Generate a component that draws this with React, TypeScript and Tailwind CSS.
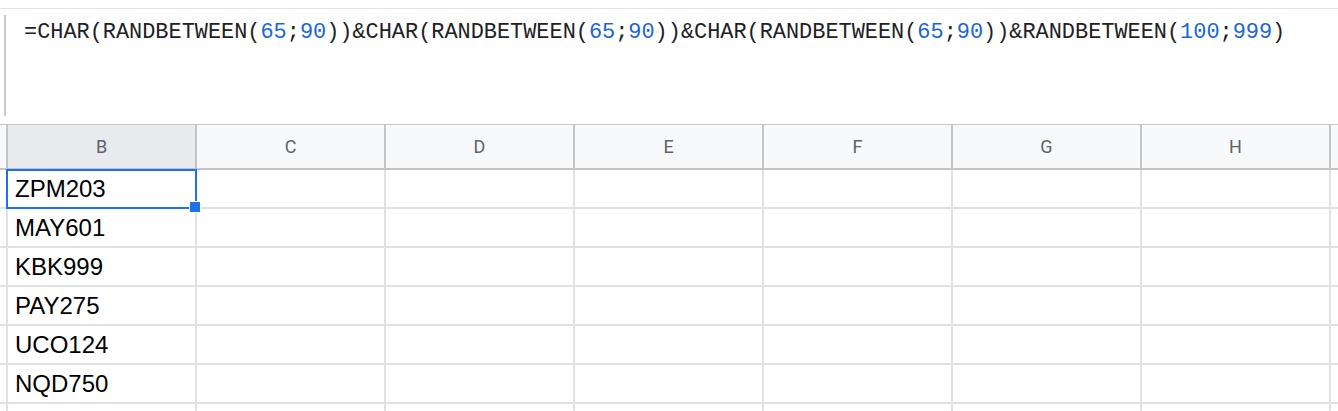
const formula: { text: string; num?: boolean }[] = [
  { text: '=CHAR(RANDBETWEEN(' },
  { text: '65', num: true },
  { text: ';' },
  { text: '90', num: true },
  { text: '))&CHAR(RANDBETWEEN(' },
  { text: '65', num: true },
  { text: ';' },
  { text: '90', num: true },
  { text: '))&CHAR(RANDBETWEEN(' },
  { text: '65', num: true },
  { text: ';' },
  { text: '90', num: true },
  { text: '))&RANDBETWEEN(' },
  { text: '100', num: true },
  { text: ';' },
  { text: '999', num: true },
  { text: ')' },
];

const columns = ['B', 'C', 'D', 'E', 'F', 'G', 'H'];
const values = ['ZPM203', 'MAY601', 'KBK999', 'PAY275', 'UCO124', 'NQD750', ''];

export default function App() {
  return (
    <div className="relative w-[1338px] h-[411px] overflow-hidden bg-white font-['Liberation_Sans',Arial,sans-serif]">
      {/* formula bar */}
      <div className="mt-2 flex h-[116px] border-t border-[#e3e3e3]">
        <div className="ml-1 mt-[6px] h-[101px] w-[2px] bg-[#c9c9c9]" />
        <div className="pl-[18px] pt-[11px] font-['Liberation_Mono',monospace] text-[21.9px] leading-[26px] text-[#202124] whitespace-nowrap">
          {formula.map((part, i) => (
            <span key={i} className={part.num ? 'text-[#1967d2]' : ''}>
              {part.text}
            </span>
          ))}
        </div>
      </div>

      {/* column headers */}
      <div className="flex h-[46px] border-t border-b-2 border-t-[#c4c7c5] border-b-[#c4c4c4]">
        <div className="w-[8px] shrink-0 border-r-2 border-[#c4c4c4] bg-[#f8f9fa]" />
        {columns.map((col) => (
          <div
            key={col}
            className={`flex w-[189px] shrink-0 items-center justify-center border-r-2 border-[#c4c4c4] font-['Roboto',Arial,sans-serif] text-[18px] text-[#5f6368] ${
              col === 'B' ? 'bg-[#e8eaed]' : 'bg-[#f8f9fa]'
            }`}
          >
            {col}
          </div>
        ))}
        <div className="flex-1 bg-[#f8f9fa]" />
      </div>

      {/* rows */}
      {values.map((value, r) => (
        <div key={r} className="flex h-[39px] border-b-2 border-[#e1e1e1]">
          <div className="w-[8px] shrink-0 border-r-2 border-[#e1e1e1]" />
          {columns.map((col, c) => (
            <div
              key={col}
              className="flex w-[189px] shrink-0 items-center border-r-2 border-[#e1e1e1] pl-[7px] text-[24px] text-black"
            >
              {c === 0 ? value : ''}
            </div>
          ))}
          <div className="flex-1" />
        </div>
      ))}

      {/* selection */}
      <div className="absolute left-[6px] top-[169px] h-[40px] w-[191px] border-2 border-[#1a73e8]" />
      <div className="absolute left-[189px] top-[201px] h-[12px] w-[12px] border border-white bg-[#1a73e8]" />
    </div>
  );
}
